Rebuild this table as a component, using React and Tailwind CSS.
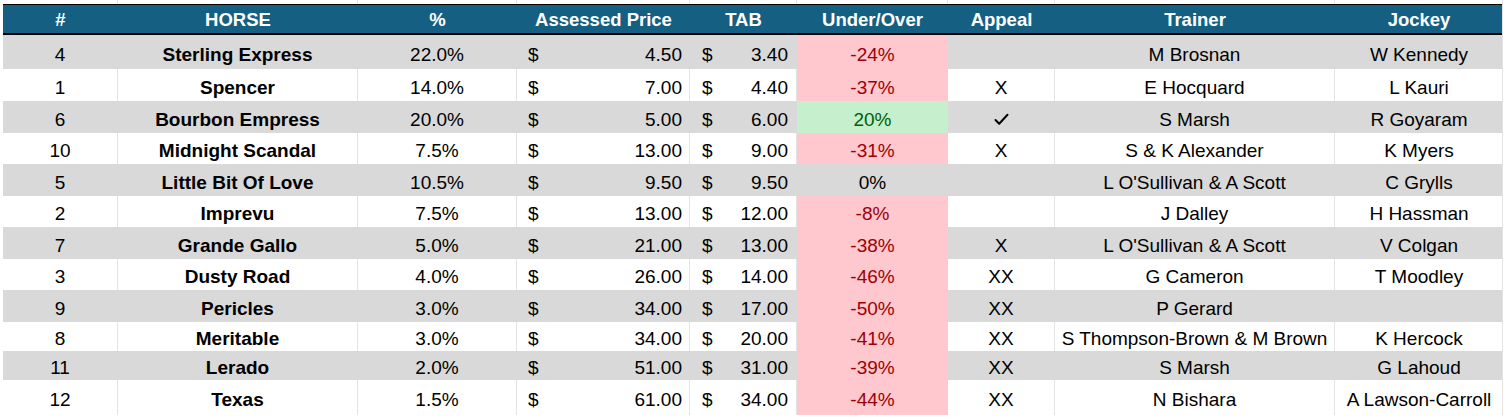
import React from 'react'

// race assessment sheet, laid out like the Excel export
const rows = [
  { no: '4', horse: 'Sterling Express', pct: '22.0%', price: '4.50', tab: '3.40', uo: '-24%', appeal: '', trainer: 'M Brosnan', jockey: 'W Kennedy', h: 'h-[34px]' },
  { no: '1', horse: 'Spencer', pct: '14.0%', price: '7.00', tab: '4.40', uo: '-37%', appeal: 'X', trainer: 'E Hocquard', jockey: 'L Kauri', h: 'h-[32px]' },
  { no: '6', horse: 'Bourbon Empress', pct: '20.0%', price: '5.00', tab: '6.00', uo: '20%', appeal: '✓', trainer: 'S Marsh', jockey: 'R Goyaram', h: 'h-[32px]' },
  { no: '10', horse: 'Midnight Scandal', pct: '7.5%', price: '13.00', tab: '9.00', uo: '-31%', appeal: 'X', trainer: 'S & K Alexander', jockey: 'K Myers', h: 'h-[31px]' },
  { no: '5', horse: 'Little Bit Of Love', pct: '10.5%', price: '9.50', tab: '9.50', uo: '0%', appeal: '', trainer: "L O'Sullivan & A Scott", jockey: 'C Grylls', h: 'h-[32px]' },
  { no: '2', horse: 'Imprevu', pct: '7.5%', price: '13.00', tab: '12.00', uo: '-8%', appeal: '', trainer: 'J Dalley', jockey: 'H Hassman', h: 'h-[31px]' },
  { no: '7', horse: 'Grande Gallo', pct: '5.0%', price: '21.00', tab: '13.00', uo: '-38%', appeal: 'X', trainer: "L O'Sullivan & A Scott", jockey: 'V Colgan', h: 'h-[32px]' },
  { no: '3', horse: 'Dusty Road', pct: '4.0%', price: '26.00', tab: '14.00', uo: '-46%', appeal: 'XX', trainer: 'G Cameron', jockey: 'T Moodley', h: 'h-[31px]' },
  { no: '9', horse: 'Pericles', pct: '3.0%', price: '34.00', tab: '17.00', uo: '-50%', appeal: 'XX', trainer: 'P Gerard', jockey: '', h: 'h-[32px]' },
  { no: '8', horse: 'Meritable', pct: '3.0%', price: '34.00', tab: '20.00', uo: '-41%', appeal: 'XX', trainer: 'S Thompson-Brown & M Brown', jockey: 'K Hercock', h: 'h-[29px]' },
  { no: '11', horse: 'Lerado', pct: '2.0%', price: '51.00', tab: '31.00', uo: '-39%', appeal: 'XX', trainer: 'S Marsh', jockey: 'G Lahoud', h: 'h-[29px]' },
  { no: '12', horse: 'Texas', pct: '1.5%', price: '61.00', tab: '34.00', uo: '-44%', appeal: 'XX', trainer: 'N Bishara', jockey: 'A Lawson-Carroll', h: 'h-[35px]' },
]

const cols = 'grid grid-cols-[115px_240px_159px_173px_107px_151px_107px_280px_168px]'

const headers = ['#', 'HORSE', '%', 'Assessed Price', 'TAB', 'Under/Over', 'Appeal', 'Trainer', 'Jockey']

const uoStyle = (v) => {
  if (v.startsWith('-')) return 'bg-[#ffc7ce] text-[#9c0006]'
  if (v === '0%') return ''
  return 'bg-[#c6efce] text-[#006100]'
}

export default function App() {
  return (
    <div className="w-[1510px] h-[420px] bg-white text-black text-[19px] leading-none overflow-hidden" style={{ fontFamily: '"Liberation Sans", Arial, sans-serif' }}>
      {/* gridlines above the table */}
      <div className={`${cols} h-[4px] ml-[3px]`}>
        {headers.map((h) => (
          <div key={h} className="border-r border-[#e3e3e3]" />
        ))}
      </div>

      <div className="ml-[3px] w-[1500px] border-r border-[#e3e3e3]">
        {/* Header */}
        <div className={`${cols} h-[31px] bg-[#156082] border-t border-b-2 border-black text-white font-bold text-[18.5px]`}>
          {headers.map((h) => (
            <div key={h} className="flex items-center justify-center pt-[2px]">{h}</div>
          ))}
        </div>

        {rows.map((r, i) => {
          const gray = i % 2 === 0
          const line = gray ? 'border-[#d9d9d9]' : 'border-[#e3e3e3]'
          return (
            <div key={r.no} className={`${cols} ${r.h} ${gray ? 'bg-[#d9d9d9]' : 'bg-white'}`}>
              <div className={`flex items-center justify-center pt-[4px] border-r ${line}`}>{r.no}</div>
              <div className={`flex items-center justify-center pt-[4px] font-bold border-r ${line}`}>{r.horse}</div>
              <div className={`flex items-center justify-center pt-[4px] border-r ${line}`}>{r.pct}</div>
              <div className={`flex items-center justify-between pt-[4px] pl-[11px] pr-[7px] border-r ${line}`}>
                <span>$</span>
                <span>{r.price}</span>
              </div>
              <div className={`flex items-center justify-between pt-[4px] pl-[12px] pr-[8px] border-r ${line}`}>
                <span>$</span>
                <span>{r.tab}</span>
              </div>
              <div className={`flex items-center justify-center pt-[4px] ${uoStyle(r.uo)}`}>{r.uo}</div>
              <div className={`flex items-center justify-center pt-[4px] border-r ${line}`}>
                {r.appeal === '✓' ? (
                  <svg width="15" height="13" viewBox="0 0 15 13">
                    <path d="M1.5 7 L5.2 10.8 L13.5 1.8" fill="none" stroke="#000" strokeWidth="2" strokeLinecap="round" strokeLinejoin="round" />
                  </svg>
                ) : (
                  r.appeal
                )}
              </div>
              <div className={`flex items-center justify-center pt-[4px] whitespace-nowrap border-r ${line}`}>{r.trainer}</div>
              <div className="flex items-center justify-center pt-[4px] whitespace-nowrap">{r.jockey}</div>
            </div>
          )
        })}
      </div>
    </div>
  )
}
